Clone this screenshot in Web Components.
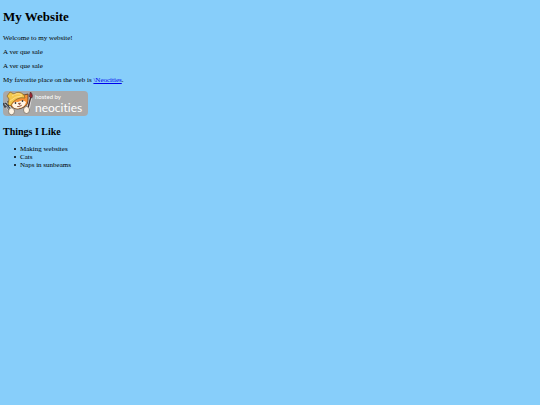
<!DOCTYPE html>
<html lang="en">
<head>
<meta charset="utf-8">
<title>My Website</title>
<style>
body { margin: 0; background: #87cefa; color: #000; font-family: "Liberation Serif", "Times New Roman", serif; font-size: 7px; line-height: 8px; }
</style>
</head>
<body>
<site-page>
  <site-heading slot="title">My Website</site-heading>
  <site-text>Welcome to my website!</site-text>
  <site-text>A ver que sale</site-text>
  <site-text>A ver que sale</site-text>
  <site-text>My favorite place on the web is <site-link href="https://neocities.org">\Neocities</site-link>.</site-text>
  <host-badge slot="badge"></host-badge>
  <like-list slot="likes">
    <span slot="title">Things I Like</span>
    <like-item>Making websites</like-item>
    <like-item>Cats</like-item>
    <like-item>Naps in sunbeams</like-item>
  </like-list>
</site-page>
<script>
function element(name, html) {
  const template = document.createElement('template');
  template.innerHTML = html;
  customElements.define(name, class extends HTMLElement {
    constructor() {
      super();
      this.attachShadow({ mode: 'open' }).append(template.content.cloneNode(true));
    }
    connectedCallback() {
      const link = this.shadowRoot.querySelector('a');
      if (link && this.hasAttribute('href')) link.href = this.getAttribute('href');
    }
  });
}

element('site-page', `<style>
  :host { display: block; padding: 9px 3px; }
  .body { display: flex; flex-direction: column; gap: 6px; padding: 9px 0 7px; }
</style>
<main><slot name="title"></slot><div class="body"><slot></slot></div><slot name="badge"></slot><slot name="likes"></slot></main>`);

element('site-heading', `<style>
  :host { display: block; }
  h1 { margin: 0; font-size: 13px; line-height: 16px; }
</style><h1><slot></slot></h1>`);

element('site-text', `<style>
  :host { display: block; }
  p { margin: 0; }
</style><p><slot></slot></p>`);

element('site-link', `<style>
  :host { display: inline; }
  a { color: #0000ee; text-decoration: underline; }
</style><a><slot></slot></a>`);

element('host-badge', `<style>
  :host { display: block; }
  a { display: flex; align-items: center; gap: 1px; width: 85px; height: 25px; border-radius: 4px; background: #a9a9a9; color: #fff; text-decoration: none; }
  svg { display: block; flex: none; }
  .words { display: flex; flex-direction: column; font-variant-ligatures: none; }
  .small { font: 6px/8px Lato, sans-serif; }
  .name { font: 12px/13px Lato, sans-serif; font-variant-ligatures: none; }
</style>
<a href="https://neocities.org" aria-label="hosted by neocities">
  <svg width="31" height="25" viewBox="0 0 31 25" aria-hidden="true">
    <path d="M2 12L9 21" stroke="#dfe8ed" stroke-width="4"/>
    <path d="M2 12L8 20" stroke="#3f4146" stroke-width="2.6"/>
    <path d="M0 12L2 16L6 14L5 10" fill="none" stroke="#42454b" stroke-width="1.5"/>
    <path d="M2 13L8 20" stroke="#b5bbc2" stroke-width="1"/>
    <path d="M28 3L25 18" stroke="#e4e4e4" stroke-width="3.4"/>
    <path d="M28 5L25 17" stroke="#4a302c" stroke-width="1.4"/>
    <path d="M26.5 6C26 4 27 3 27.5 1C29.5 3 30 5 28.7 7Z" fill="#9b2630" stroke="#49252b" stroke-width=".7"/>
    <path d="M7 9L7 3L12 4Q17 1 21 4L25 3L25 10Q25 14 21 16Q14 20 9 16Q6 14 7 9Z" fill="#f59235" stroke="#634022" stroke-width=".9"/>
    <path d="M9 14Q11 10 15 11Q20 8 23 11Q22 16 17 17Q11 19 9 14Z" fill="#fff5e5"/>
    <path d="M5 13L6 8L4 5L7 1L11 3Q16 -1 21 4L22 7Q18 6 14 8Q10 10 8 14L7 15Z" fill="#f4c84c" stroke="#8e6b2a" stroke-width=".8"/>
    <path d="M9 5Q14 1 19 4M7 10Q12 5 19 5" fill="none" stroke="#ffe39a" stroke-width=".8"/>
    <ellipse cx="12.5" cy="12" rx=".8" ry="1.1" fill="#333"/><ellipse cx="19.5" cy="10" rx=".8" ry="1.1" fill="#333"/>
    <path d="M15 12.5L17.5 12L16.7 13.7ZM14 15.5Q16.5 16.5 19 14" fill="#8b4934" stroke="#8b4934" stroke-width=".6"/>
    <ellipse cx="8.5" cy="20.3" rx="3" ry="3.5" fill="#fff4e4" stroke="#6b6255" stroke-width=".7"/>
    <ellipse cx="23.5" cy="19" rx="3" ry="3.5" fill="#fff4e4" stroke="#6b6255" stroke-width=".7"/>
  </svg>
  <span class="words"><span class="small">hosted by</span><span class="name">neocities</span></span>
</a>`);

element('like-list', `<style>
  :host { display: block; }
  h2 { margin: 10px 0 7px; font-size: 10px; line-height: 12px; }
  .items { display: flex; flex-direction: column; padding: 0 0 0 11px; }
</style><section><h2><slot name="title"></slot></h2><div class="items" role="list"><slot></slot></div></section>`);

element('like-item', `<style>
  :host { display: flex; align-items: center; gap: 4px; }
  :host::before { content: ""; width: 2px; height: 2px; border-radius: 1px; background: #000; }
</style><slot></slot>`);
document.querySelectorAll('like-item').forEach(item => item.setAttribute('role', 'listitem'));
</script>
</body>
</html>
